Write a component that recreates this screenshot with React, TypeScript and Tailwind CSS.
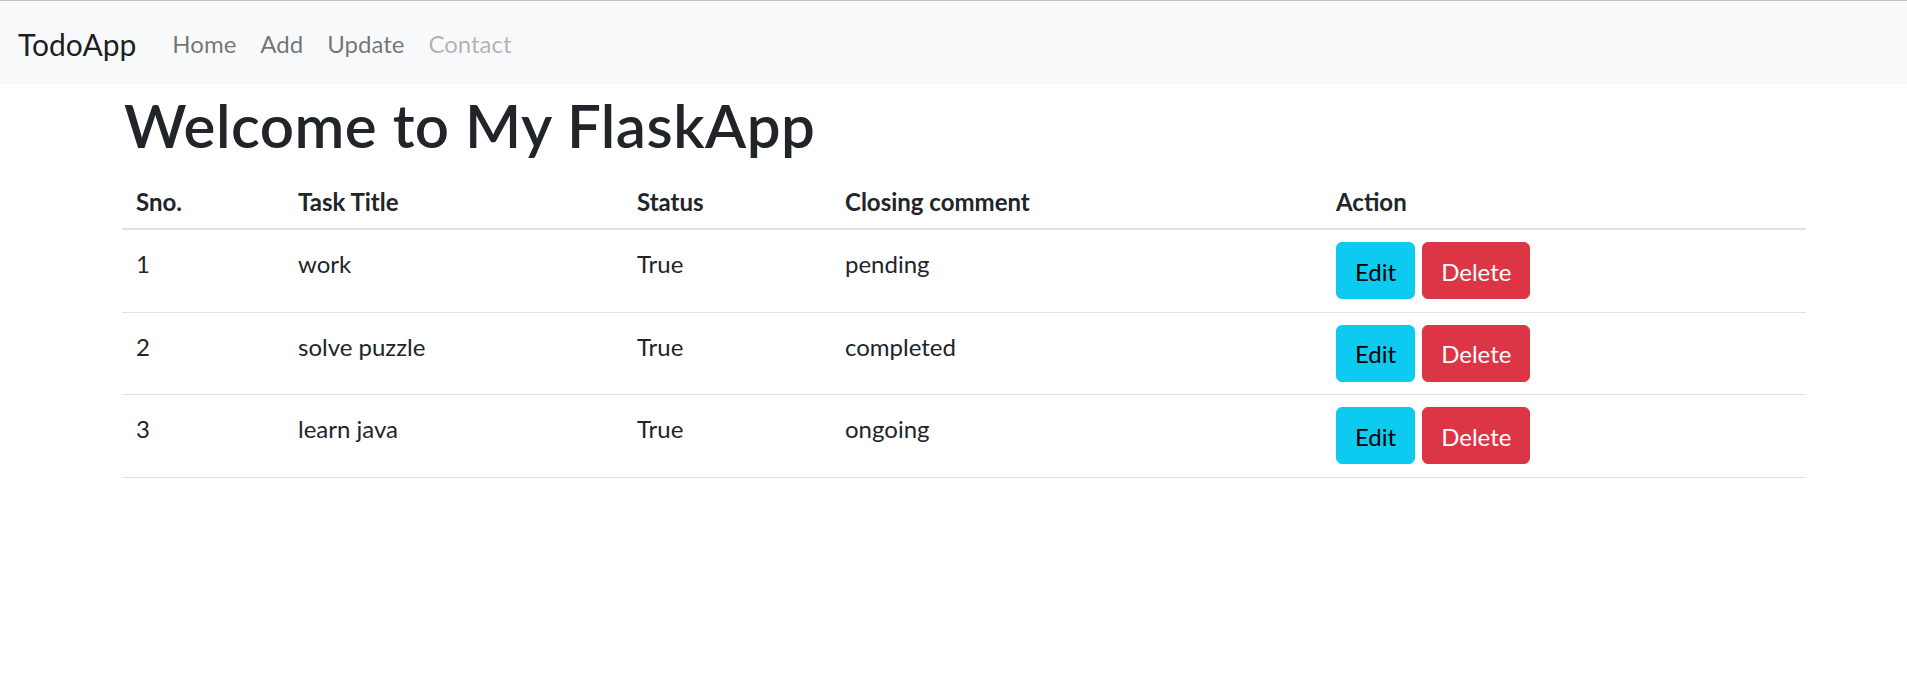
import React from 'react';

const TASKS = [
  { sno: 1, title: 'work', status: 'True', comment: 'pending' },
  { sno: 2, title: 'solve puzzle', status: 'True', comment: 'completed' },
  { sno: 3, title: 'learn java', status: 'True', comment: 'ongoing' },
];

const App: React.FC = () => {
  return (
    <div className="min-h-screen bg-white font-['Lato','Liberation_Sans',sans-serif] text-[#212529]">
      {/* Navbar */}
      <nav className="h-[84px] border-t border-[#c4c4c4] bg-[#f8f9fa] flex items-center px-[18px]">
        <a href="#" className="text-[30px] leading-[45px] text-black/90 mr-[24px] pt-[3px]">TodoApp</a>
        <ul className="flex items-center pt-[3px]">
          <li><a href="#" className="block px-[12px] text-[24px] leading-9 text-black/55">Home</a></li>
          <li><a href="#" className="block px-[12px] text-[24px] leading-9 text-black/55">Add</a></li>
          <li><a href="#" className="block px-[12px] text-[24px] leading-9 text-black/55">Update</a></li>
          <li><a href="#" className="block px-[12px] text-[24px] leading-9 text-black/30">Contact</a></li>
        </ul>
      </nav>

      <div className="pl-[122px] pr-[101px]">
        <h1 className="text-[60px] leading-[72px] font-semibold tracking-[0.5px] pt-[5px] mb-[7px] pl-[2px]">Welcome to My FlaskApp</h1>

        <table className="w-full table-fixed border-collapse text-[24px] leading-9">
          <colgroup>
            <col className="w-[162px]" />
            <col className="w-[339px]" />
            <col className="w-[208px]" />
            <col className="w-[491px]" />
            <col />
          </colgroup>
          <thead>
            <tr className="border-b-2 border-[#dee2e6]">
              <th className="text-left font-bold pt-4 pb-2 pl-[14px]">Sno.</th>
              <th className="text-left font-bold pt-4 pb-2 pl-[14px]">Task Title</th>
              <th className="text-left font-bold pt-4 pb-2 pl-[14px]">Status</th>
              <th className="text-left font-bold pt-4 pb-2 pl-[14px]">Closing comment</th>
              <th className="text-left font-bold pt-4 pb-2 pl-[14px]">Action</th>
            </tr>
          </thead>
          <tbody>
            {TASKS.map((t) => (
              <tr key={t.sno} className="border-b border-[#dee2e6]">
                <td className="align-top pt-4 pl-[14px]">{t.sno}</td>
                <td className="align-top pt-4 pl-[14px]">{t.title}</td>
                <td className="align-top pt-4 pl-[14px]">{t.status}</td>
                <td className="align-top pt-4 pl-[14px]">{t.comment}</td>
                <td className="align-top pt-3 pb-[12.5px] pl-[14px]">
                  <div className="flex gap-[7px]">
                    <button className="h-[57px] px-[18px] pt-[2px] rounded-[6px] border border-[#0dcaf0] bg-[#0dcaf0] text-black text-[24px]">Edit</button>
                    <button className="h-[57px] px-[18px] pt-[2px] rounded-[6px] border border-[#dc3545] bg-[#dc3545] text-white text-[24px]">Delete</button>
                  </div>
                </td>
              </tr>
            ))}
          </tbody>
        </table>
      </div>
    </div>
  );
};

export default App;
